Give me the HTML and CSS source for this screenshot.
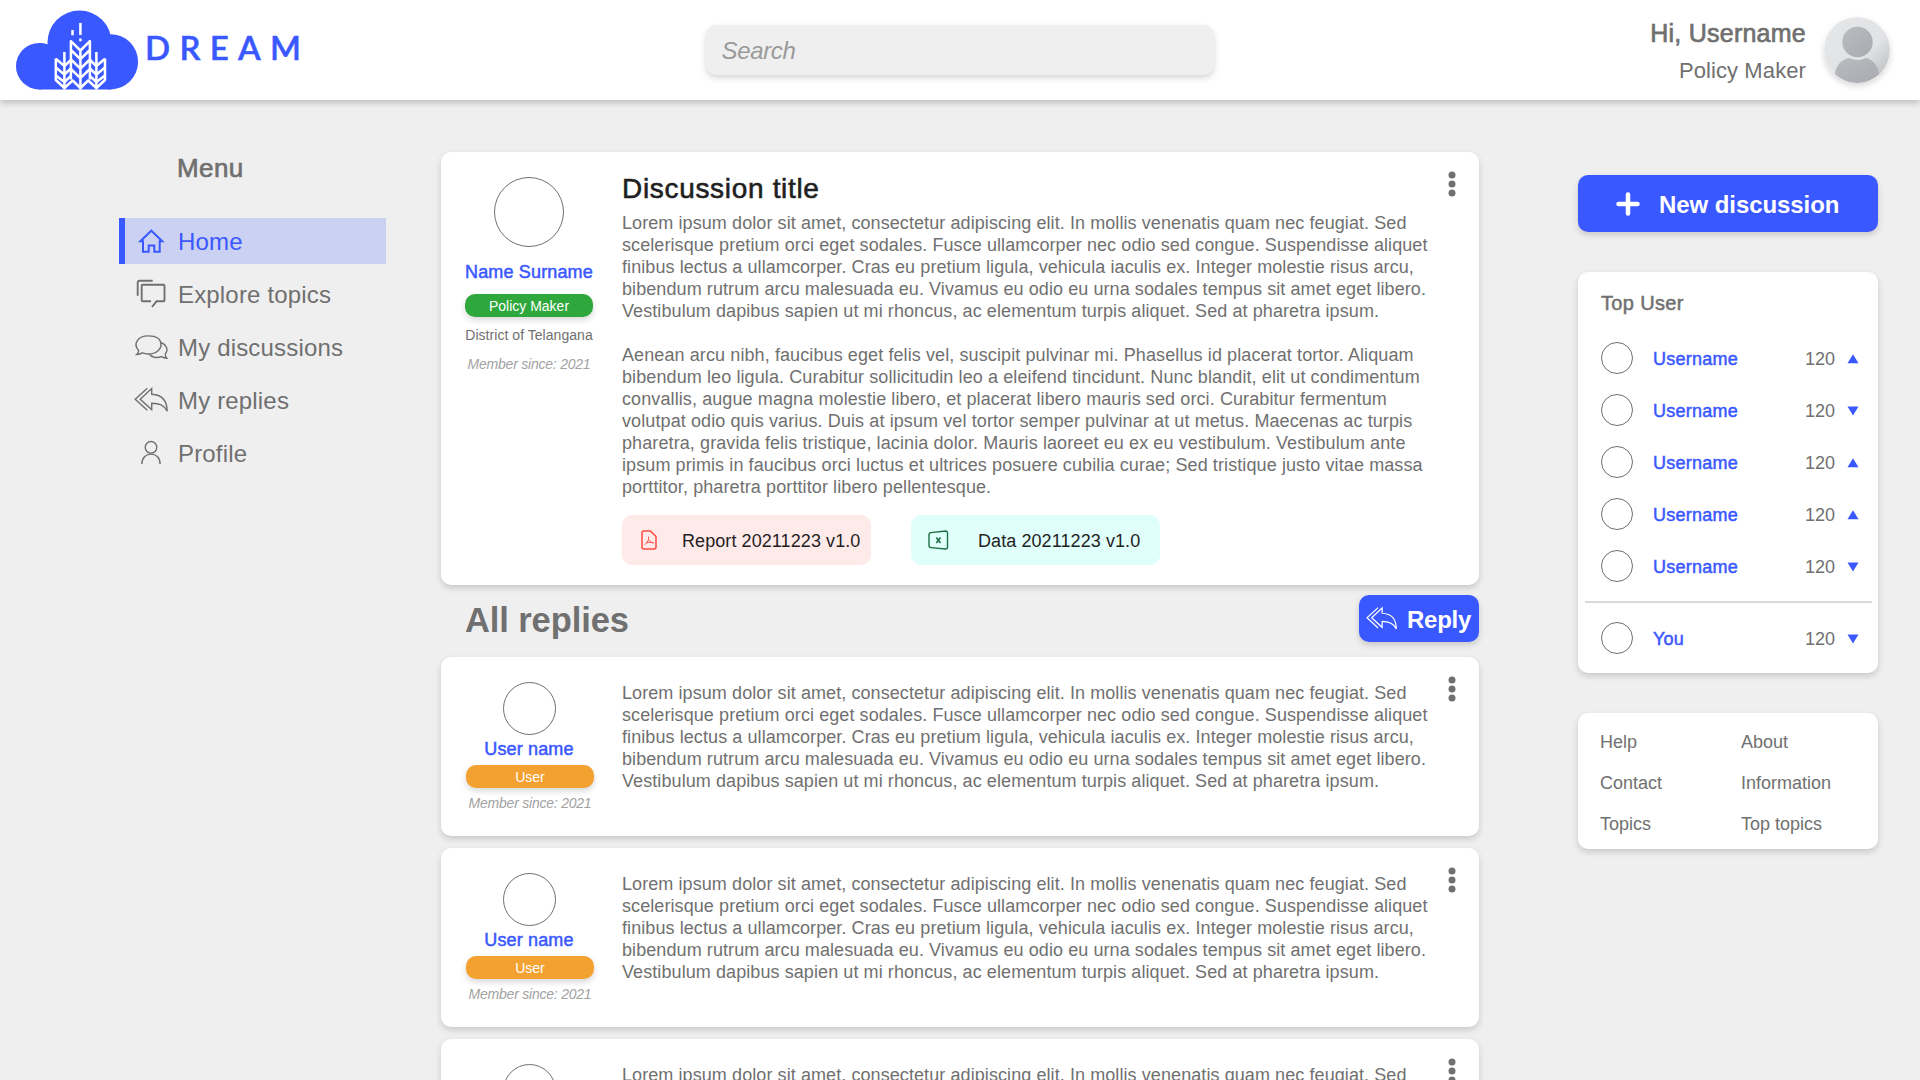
FILE: index.html
```html
<!DOCTYPE html>
<html lang="en">
<head>
<meta charset="utf-8">
<title>DREAM</title>
<link rel="stylesheet" href="styles.css">
</head>
<body>
<svg class="defs" width="0" height="0">
  <symbol id="reply-all" viewBox="0 0 36 46"><path d="M14.3 11.2 2.2 22.2 14.3 33.3M18.7 11.5 7.2 22.2 18.7 32.6V26.2C26.5 26.2 31 28 34.2 34.3 34 23.500 28.500 17.700 18.700 17.300Z"/></symbol>
  <symbol id="dots" viewBox="0 0 8 26"><circle cx="4" cy="4" r="3.5"/><circle cx="4" cy="13" r="3.5"/><circle cx="4" cy="22" r="3.5"/></symbol>
  <symbol id="up" viewBox="0 0 12 10"><path d="M.5 9.300 6 .300 11.500 9.300Z"/></symbol>
  <symbol id="down" viewBox="0 0 12 10"><path d="M.5.500 6 9.500 11.500.500Z"/></symbol>
</svg>

<header class="topbar">
  <div class="brand">
    <svg class="cloud" width="124" height="80" viewBox="15 10 124 80">
      <g fill="#3a58ff">
        <circle cx="39.200" cy="66.200" r="23.200"/><circle cx="79.500" cy="42.500" r="32"/><circle cx="110.500" cy="61.800" r="27.600"/>
        <path d="M39 43Q44 43 48.500 44.500L60 64H111V89.400H39Z"/>
      </g>
      <g fill="none" stroke="#fff" stroke-width="2.500" stroke-linejoin="round">
        <path d="M80.400 89.500V50.500M70.900 79.500V41.200L80.400 50.500 89.900 41.200V79.500M70.900 50 80.400 59.200 89.900 50M70.900 59.500 80.400 68.700 89.900 59.500M70.900 69 80.400 78.200 89.900 69"/>
        <path d="M64.400 89.500V52M55.800 58.500V80L64.400 88 72.600 80.500 80.400 88 88.200 80.500 96.400 88 105 80V58.500M96.400 89.500V52"/>
        <path d="M55.800 58.800 64.400 66 70.900 60M55.800 67.500 64.400 74.500 70.900 68.500M55.800 75.500 64.400 82 70.900 76M105 58.800 96.400 66 89.900 60M105 67.500 96.400 74.500 89.900 68.500M105 75.500 96.400 82 89.900 76"/>
        <path d="M80.400 23V35M72.500 30V35.300M80.400 38.500V41.200"/>
      </g>
    </svg>
    <span class="wordmark">DREAM</span>
  </div>
  <div class="search">Search</div>
  <div class="account">
    <div class="account-text">
      <div class="hello">Hi, Username</div>
      <div class="role">Policy Maker</div>
    </div>
    <svg class="account-photo" width="66" height="66" viewBox="0 0 66 66">
      <defs>
        <linearGradient id="disc" x1="0" y1="0" x2="1" y2="1"><stop offset="0" stop-color="#e5e6e8"/><stop offset=".6" stop-color="#e2e3e5"/><stop offset="1" stop-color="#b4b5b8"/></linearGradient>
        <linearGradient id="bust" x1="0" y1="0" x2="1" y2="1"><stop offset="0" stop-color="#bbbcc2"/><stop offset="1" stop-color="#a9aaaf"/></linearGradient>
        <clipPath id="round"><circle cx="33" cy="33" r="33"/></clipPath>
      </defs>
      <circle cx="33" cy="33" r="33" fill="url(#disc)"/>
      <g clip-path="url(#round)" fill="url(#bust)"><circle cx="33.500" cy="25" r="15.200"/><path d="M11 57C12 48 18 42 25 41Q33.500 45 42 41C48 42 54 48 55 57V66H11Z"/></g>
    </svg>
  </div>
</header>

<div class="page">
  <nav class="menu">
    <h2 class="menu-title">Menu</h2>
    <a class="menu-item active"><svg class="menu-icon home-icon" viewBox="0 0 36 46"><path d="M7.300 23.300 18.300 12.700 29.300 23.300H26.700V33.700H21.300V27.500H15.700V33.700H10V23.300Z"/></svg>Home</a>
    <a class="menu-item"><svg class="menu-icon topics-icon" viewBox="0 0 36 46"><path d="M19.700 9.700H6.700Q4.700 9.700 4.700 11.700V24.700M18 30.300H9.700Q8.700 30.300 8.700 29.300V14.700Q8.700 13.700 9.700 13.700H30.500Q31.500 13.700 31.500 14.700V29.300Q31.500 30.300 30.500 30.300H23.500L19 36"/></svg>Explore topics</a>
    <a class="menu-item"><svg class="menu-icon" viewBox="0 0 36 46"><path d="M5.600 26.500C-.500 19.500 5 11.900 15.300 11.900S28 17 28 21 23.500 30 15.300 30Q12 30 9.500 28.900 7 30.500 3.700 30.500 5.700 28.800 5.600 26.500ZM28 18.500C33 20.500 36 25.500 32.300 29.800Q32 32.500 33.800 34.200 30.800 34.200 28.500 32.700C23.500 34.500 18.500 33.200 16.200 30"/></svg>My discussions</a>
    <a class="menu-item"><svg class="menu-icon"><use href="#reply-all"/></svg>My replies</a>
    <a class="menu-item"><svg class="menu-icon" viewBox="0 0 36 46"><circle cx="18" cy="17.300" r="5.800"/><path d="M8.900 34C8.900 20.800 27.100 20.800 27.100 34"/></svg>Profile</a>
  </nav>

  <main class="feed">
    <article class="card topic">
      <div class="author">
        <div class="photo"></div>
        <div class="name">Name Surname</div>
        <div class="badge green">Policy Maker</div>
        <div class="place">District of Telangana</div>
        <div class="since">Member since: 2021</div>
      </div>
      <div class="content">
        <h1 class="title">Discussion title</h1>
        <p class="text">Lorem ipsum dolor sit amet, consectetur adipiscing elit. In mollis venenatis quam nec feugiat. Sed<br>scelerisque pretium orci eget sodales. Fusce ullamcorper nec odio sed congue. Suspendisse aliquet<br>finibus lectus a ullamcorper. Cras eu pretium ligula, vehicula iaculis ex. Integer molestie risus arcu,<br>bibendum rutrum arcu malesuada eu. Vivamus eu odio eu urna sodales tempus sit amet eget libero.<br>Vestibulum dapibus sapien ut mi rhoncus, ac elementum turpis aliquet. Sed at pharetra ipsum.</p>
        <p class="text">Aenean arcu nibh, faucibus eget felis vel, suscipit pulvinar mi. Phasellus id placerat tortor. Aliquam<br>bibendum leo ligula. Curabitur sollicitudin leo a eleifend tincidunt. Nunc blandit, elit ut condimentum<br>convallis, augue magna molestie libero, et placerat libero mauris sed orci. Curabitur fermentum<br>volutpat odio quis varius. Duis at ipsum vel tortor semper pulvinar at ut metus. Maecenas ac turpis<br>pharetra, gravida felis tristique, lacinia dolor. Mauris laoreet eu ex eu vestibulum. Vestibulum ante<br>ipsum primis in faucibus orci luctus et ultrices posuere cubilia curae; Sed tristique justo vitae massa<br>porttitor, pharetra porttitor libero pellentesque.</p>
        <div class="files">
          <a class="file pdf"><svg width="16" height="20" viewBox="0 0 16 20"><path d="M1 3Q1 1 3 1H9.500L15 6.500V17Q15 19 13 19H3Q1 19 1 17Z" stroke-width="1.500"/><path d="M7.500 6.500V9.500Q6.500 13 3.500 14.800M7.500 9.500Q8.500 12 12.500 13M5.500 12.700Q8.500 11.500 12.500 13" stroke-width=".900"/></svg><span>Report 20211223 v1.0</span></a>
          <a class="file xls"><svg width="22" height="20" viewBox="0 0 22 20"><path d="M3 2.600 17.500 1Q19.500 1 19.500 3V17Q19.500 19 17.500 19L3 17.600Q1 17.400 1 15.500V4.800Q1 2.800 3 2.600Z" stroke-width="1.400"/><path d="M8.300 7.500 12.500 13M12.500 7.500 8.300 13" stroke-width="1.600"/></svg><span>Data 20211223 v1.0</span></a>
        </div>
      </div>
      <svg class="more" width="8" height="26"><use href="#dots"/></svg>
    </article>

    <div class="replies-head">
      <h2 class="replies-title">All replies</h2>
      <button class="reply-btn"><svg class="reply-icon"><use href="#reply-all"/></svg><span>Reply</span></button>
    </div>

    <article class="card reply">
      <div class="author">
        <div class="photo"></div>
        <div class="name">User name</div>
        <div class="badge orange">User</div>
        <div class="since">Member since: 2021</div>
      </div>
      <p class="text">Lorem ipsum dolor sit amet, consectetur adipiscing elit. In mollis venenatis quam nec feugiat. Sed<br>scelerisque pretium orci eget sodales. Fusce ullamcorper nec odio sed congue. Suspendisse aliquet<br>finibus lectus a ullamcorper. Cras eu pretium ligula, vehicula iaculis ex. Integer molestie risus arcu,<br>bibendum rutrum arcu malesuada eu. Vivamus eu odio eu urna sodales tempus sit amet eget libero.<br>Vestibulum dapibus sapien ut mi rhoncus, ac elementum turpis aliquet. Sed at pharetra ipsum.</p>
      <svg class="more" width="8" height="26"><use href="#dots"/></svg>
    </article>
    <article class="card reply">
      <div class="author">
        <div class="photo"></div>
        <div class="name">User name</div>
        <div class="badge orange">User</div>
        <div class="since">Member since: 2021</div>
      </div>
      <p class="text">Lorem ipsum dolor sit amet, consectetur adipiscing elit. In mollis venenatis quam nec feugiat. Sed<br>scelerisque pretium orci eget sodales. Fusce ullamcorper nec odio sed congue. Suspendisse aliquet<br>finibus lectus a ullamcorper. Cras eu pretium ligula, vehicula iaculis ex. Integer molestie risus arcu,<br>bibendum rutrum arcu malesuada eu. Vivamus eu odio eu urna sodales tempus sit amet eget libero.<br>Vestibulum dapibus sapien ut mi rhoncus, ac elementum turpis aliquet. Sed at pharetra ipsum.</p>
      <svg class="more" width="8" height="26"><use href="#dots"/></svg>
    </article>
    <article class="card reply">
      <div class="author">
        <div class="photo"></div>
      </div>
      <p class="text">Lorem ipsum dolor sit amet, consectetur adipiscing elit. In mollis venenatis quam nec feugiat. Sed</p>
      <svg class="more" width="8" height="26"><use href="#dots"/></svg>
    </article>
  </main>

  <aside class="side">
    <button class="new-btn"><svg width="24" height="24" viewBox="0 0 24 24"><path d="M12 2.500V21.500M2.500 12H21.500"/></svg><span>New discussion</span></button>
    <section class="card top-users">
      <h3 class="side-title">Top User</h3>
      <div class="user"><i class="dot"></i><b class="uname">Username</b><span class="score">120</span><svg class="trend"><use href="#up"/></svg></div>
      <div class="user"><i class="dot"></i><b class="uname">Username</b><span class="score">120</span><svg class="trend"><use href="#down"/></svg></div>
      <div class="user"><i class="dot"></i><b class="uname">Username</b><span class="score">120</span><svg class="trend"><use href="#up"/></svg></div>
      <div class="user"><i class="dot"></i><b class="uname">Username</b><span class="score">120</span><svg class="trend"><use href="#up"/></svg></div>
      <div class="user"><i class="dot"></i><b class="uname">Username</b><span class="score">120</span><svg class="trend"><use href="#down"/></svg></div>
      <div class="rule"></div>
      <div class="user"><i class="dot"></i><b class="uname">You</b><span class="score">120</span><svg class="trend"><use href="#down"/></svg></div>
    </section>
    <section class="card links">
      <a>Help</a><a>About</a><a>Contact</a><a>Information</a><a>Topics</a><a>Top topics</a>
    </section>
  </aside>
</div>
</body>
</html>
```
FILE: styles.css
```css
* { box-sizing: border-box; }
html, body { height: 1080px; overflow: hidden; }
body {
  margin: 0;
  background: #efefef;
  color: #707070;
  font: 18px/22px "Liberation Sans", Arial, sans-serif;
}
h1, h2, h3, p { margin: 0; font-weight: 400; }
button { border: 0; padding: 0; font-family: inherit; }
.defs { display: block; }

.topbar {
  position: relative;
  height: 100px;
  background: #fff;
  box-shadow: 0 3px 6px rgba(0, 0, 0, .2);
  display: grid;
  grid-template-columns: 706px 508px 1fr;
  align-items: start;
}
.brand { display: flex; padding: 10px 0 0 15px; }
.cloud { overflow: visible; }
.wordmark {
  margin: 14px 0 0 6px;
  font: 600 33px/46px Lato, sans-serif;
  letter-spacing: 9.3px;
  color: #3a58ff;
  -webkit-text-stroke: .5px;
}
.search {
  height: 50px;
  margin-top: 25px;
  padding-left: 15.5px;
  border-radius: 10px;
  background: #efefef;
  box-shadow: 0 3px 6px rgba(0, 0, 0, .16);
  font-size: 24px;
  line-height: 51px;
  font-style: italic;
  letter-spacing: -.35px;
  color: #9a9a9a;
}
.account { display: flex; justify-content: flex-end; gap: 18px; padding: 17px 30px 0 0; }
.account-text { text-align: right; }
.hello { font-size: 25px; line-height: 32px; letter-spacing: .25px; -webkit-text-stroke: .7px; }
.role { margin-top: 9px; font-size: 22px; line-height: 26px; letter-spacing: .1px; }
.account-photo { border-radius: 50%; box-shadow: 0 3px 6px rgba(0, 0, 0, .16); }

.page { display: grid; grid-template-columns: 267px 1038px 300px; height: 980px; padding-left: 119px; justify-content: start; align-items: start; }
.menu { padding-top: 52px; }
.feed { margin-left: 55px; padding-top: 52px; width: 1038px; }
.side { margin-left: 154px; padding-top: 75px; width: 300px; }

.menu-title { margin-left: 58px; height: 66px; font-size: 26px; line-height: 32px; letter-spacing: .4px; -webkit-text-stroke: .7px; }
.menu-item {
  display: flex;
  gap: 9px;
  height: 46px;
  margin-bottom: 7px;
  padding-left: 14px;
  font-size: 24px;
  line-height: 48px;
  letter-spacing: .17px;
}
.menu-item.active { border-left: 6px solid #3a58ff; padding-left: 8px; background: #cbd1f2; color: #3a58ff; }
.menu-icon { width: 36px; height: 46px; fill: none; stroke: currentColor; stroke-width: 1.4; }
.home-icon { stroke-width: 2; }
.topics-icon { stroke-width: 1.9; }

.card { background: #fff; border-radius: 10px; box-shadow: 0 3px 6px rgba(0, 0, 0, .16); }
.topic, .reply { display: flex; padding: 25px 23px 0 24px; }
.author { width: 128px; margin-right: 29px; display: flex; flex-direction: column; align-items: center; white-space: nowrap; }
.topic { height: 432.5px; }
.photo { width: 70px; height: 70px; border: 1px solid #707070; border-radius: 50%; }
.name { color: #3a58ff; letter-spacing: .15px; -webkit-text-stroke: .5px; }
.topic .name { margin-top: 14px; }
.badge {
  width: 128px;
  height: 23px;
  border-radius: 10px;
  text-align: center;
  font-size: 14px;
  line-height: 24px;
  color: #fff;
  box-shadow: 0 3px 6px rgba(0, 0, 0, .16);
}
.topic .badge { margin-top: 11px; }
.green { background: #2ea83c; }
.orange { background: #f3a130; }
.place { margin-top: 10px; font-size: 14px; line-height: 16px; letter-spacing: .04px; }
.since { margin-top: 13px; font-size: 14px; line-height: 16px; font-style: italic; letter-spacing: -.22px; color: #a2a2a2; }
.content { width: 830px; }
.title { height: 35px; font-size: 28px; line-height: 23px; letter-spacing: .68px; color: #1f1f1f; -webkit-text-stroke: .6px; }
.text { white-space: nowrap; letter-spacing: .083px; }
.content .text + .text { margin-top: 22px; letter-spacing: .1px; }
.files { display: flex; gap: 40px; margin-top: 17px; }
.file { display: flex; align-items: center; width: 249px; height: 50px; border-radius: 10px; color: #1f1f1f; white-space: nowrap; letter-spacing: .08px; }
.file span { padding-top: 2px; }
.file svg { fill: none; }
.pdf { background: #ffeaea; padding-left: 19px; gap: 25px; }
.pdf svg { stroke: #ff4b3f; }
.xls { background: #e0fefa; padding-left: 17px; gap: 28px; }
.xls svg { stroke: #1d7044; }
.more { margin: -6.5px 0 0 auto; fill: #707070; flex: none; }

.replies-head { display: flex; justify-content: space-between; height: 72.5px; padding: 10.5px 0 0 24px; }
.replies-title { font-size: 34.5px; line-height: 50px; font-weight: 700; letter-spacing: -.1px; }
.reply-btn {
  display: flex;
  align-items: center;
  width: 120px;
  height: 47px;
  padding-left: 6px;
  gap: 9px;
  border-radius: 10px;
  background: #3a58ff;
  color: #fff;
  box-shadow: 0 3px 6px rgba(0, 0, 0, .16);
  font-size: 24px;
  font-weight: 700;
  letter-spacing: -.25px;
}
.reply-btn span, .new-btn span { padding-top: 2px; }
.reply-icon { width: 33px; height: 43px; fill: none; stroke: #fff; stroke-width: 1.3; }

.reply { height: 179px; margin-bottom: 12px; }
.reply .photo { width: 53px; height: 53px; margin-left: 1px; }
.reply .name { margin-top: 3px; }
.reply .badge { margin: 5px 0 0 2px; }
.reply .since { margin: 7px 0 0 2px; }

.new-btn {
  display: flex;
  align-items: center;
  gap: 19px;
  width: 300px;
  height: 57px;
  padding-left: 38px;
  border-radius: 10px;
  background: #3a58ff;
  color: #fff;
  box-shadow: 0 3px 6px rgba(0, 0, 0, .16);
  font-size: 24px;
  font-weight: 700;
  letter-spacing: -.07px;
  white-space: nowrap;
}
.new-btn svg { stroke: #fff; stroke-width: 4.5; stroke-linecap: round; }
.top-users { height: 401px; margin-top: 40px; padding-top: 20px; }
.side-title { height: 40px; padding-left: 23px; font-size: 20px; line-height: 22px; letter-spacing: .35px; -webkit-text-stroke: .5px; }
.user { display: flex; align-items: center; height: 52px; padding: 0 19px 0 23px; }
.dot { width: 32px; height: 32px; border: 1px solid #707070; border-radius: 50%; }
.uname { margin-left: 20px; padding-top: 2px; font-weight: 400; letter-spacing: .25px; color: #3a58ff; -webkit-text-stroke: .5px; }
.score { margin-left: auto; padding-top: 2px; }
.trend { width: 12px; height: 10px; margin: 1px 0 0 12px; fill: #3a58ff; }
.rule { height: 2px; margin: 9px 6px 9px 7px; background: #d9d9d9; }
.links { display: grid; grid-template-columns: 141px 1fr; grid-auto-rows: 41px; height: 136px; margin-top: 40px; padding: 9px 0 0 22px; line-height: 41px; }
```
